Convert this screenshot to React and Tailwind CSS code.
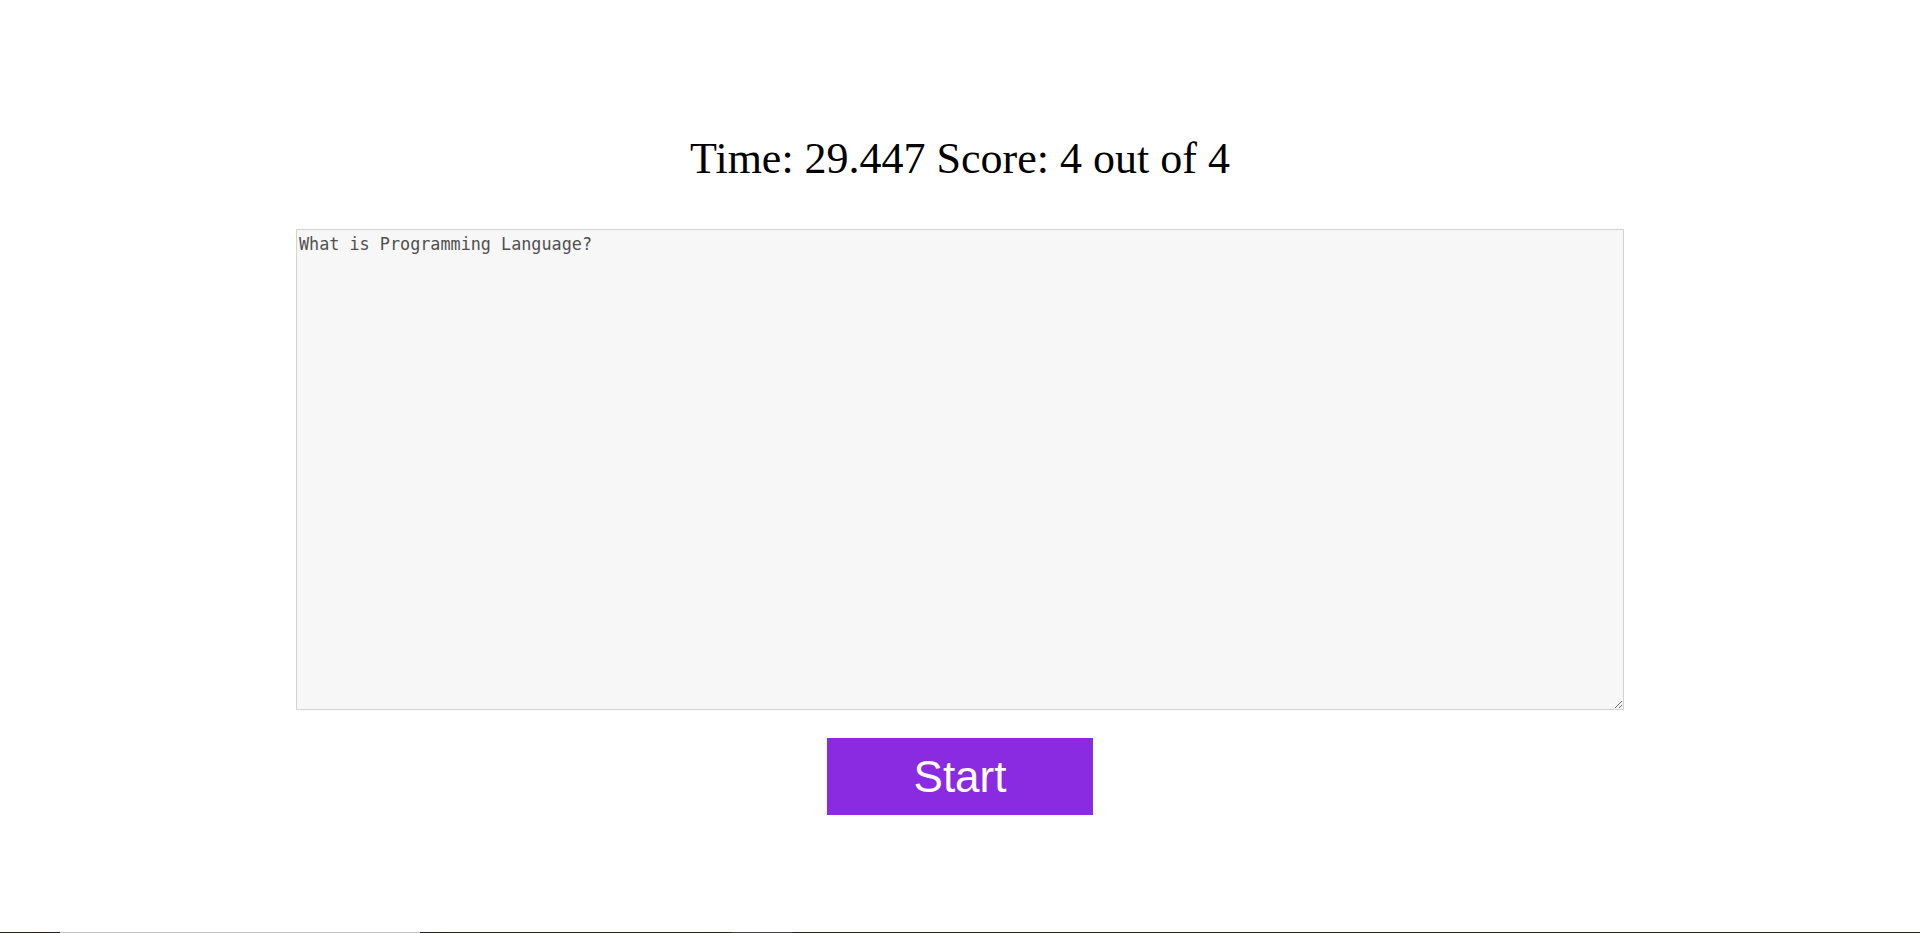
import React, { useState } from "react";

export default function App() {
  const [text, setText] = useState("What is Programming Language?");

  return (
    <div className="min-h-screen flex flex-col bg-white">
      <div className="flex flex-col items-center pt-[133px]">
        {/* Status */}
        <h1
          className="text-[44px] leading-[52px] text-black"
          style={{ fontFamily: '"Liberation Serif", "Times New Roman", serif' }}
        >
          Time: 29.447 Score: 4 out of 4
        </h1>

        {/* Question box */}
        <textarea
          value={text}
          onChange={(e) => setText(e.target.value)}
          className="mt-[44px] block w-[1328px] h-[481px] p-[2px] bg-[#f7f7f7] border border-[#d3d3d3] text-[#505050] text-[16.8px] leading-[25px] outline-none"
          style={{ fontFamily: '"DejaVu Sans Mono", "Liberation Mono", monospace' }}
        />

        <button
          type="button"
          className="mt-[28px] w-[266px] h-[77px] bg-[#8a2be2] text-white text-[44px] leading-none"
          style={{ fontFamily: '"Liberation Sans", Arial, sans-serif' }}
        >
          Start
        </button>
      </div>

      {/* bottom edge strip */}
      <div className="mt-auto flex h-px">
        <div className="w-[60px] bg-[#2b2116]" />
        <div className="w-[360px] bg-[#c0c0c0]" />
        <div className="w-[312px] bg-[#2b2116]" />
        <div className="w-[61px] bg-[#4a403b]" />
        <div className="flex-1 bg-[#2b2116]" />
      </div>
    </div>
  );
}
